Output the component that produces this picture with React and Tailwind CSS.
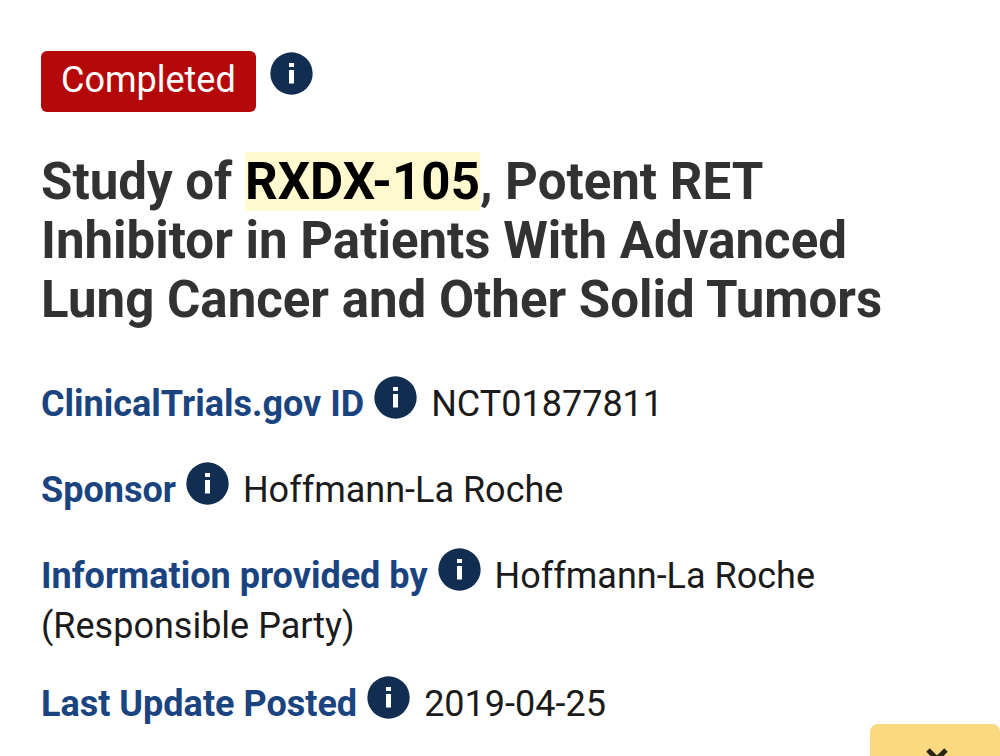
const FIELDS = [
  { label: 'ClinicalTrials.gov ID', value: 'NCT01877811', spacing: 'mb-9' },
  { label: 'Sponsor', value: 'Hoffmann-La Roche', spacing: 'mb-9' },
  { label: 'Information provided by', value: 'Hoffmann-La Roche (Responsible Party)', spacing: 'mb-7' },
  { label: 'Last Update Posted', value: '2019-04-25', spacing: 'mb-0' },
];

function InfoButton({ label }) {
  return (
    <button
      type="button"
      aria-label={`More about ${label}`}
      className="-my-2 inline-block size-[43px] align-[-3px]"
    >
      <svg viewBox="0 0 43 43" className="block size-full" aria-hidden="true">
        <circle cx="21.5" cy="21.5" r="21.2" fill="#112e51" />
        <path d="M19 11h5v4h-5zM19 18h5v13.5h-5z" fill="#fff" />
      </svg>
    </button>
  );
}

function Field({ label, value, spacing }) {
  return (
    <div className={spacing}>
      <dt className="mr-2.5 inline font-bold text-[#1a4480]">{label}</dt>
      <dd className="inline">
        <InfoButton label={label} />
        <span className="ml-3.5">{value}</span>
      </dd>
    </div>
  );
}

export default function App() {
  return (
    <div className="min-h-screen overflow-hidden bg-white font-[Roboto,sans-serif] text-[#1b1b1b]">
      <main className="px-[41px] pt-[51px]">
        <div className="flex items-start gap-3.5">
          <span className="rounded-md bg-[#b50909] px-5 pt-[3px] pb-[5px] text-[36px] leading-[53px] text-white">
            Completed
          </span>
          <div className="pt-[9px]">
            <InfoButton label="recruitment status" />
          </div>
        </div>

        <h1 className="mt-10 text-[51px] leading-[59px] font-bold text-[#323232]">
          Study of <mark className="bg-[#fff9cf] text-black">RXDX-105</mark>, Potent RET Inhibitor in
          Patients With Advanced Lung Cancer and Other Solid Tumors
        </h1>

        <dl className="mt-[50px] text-[36px] leading-[50px]">
          {FIELDS.map((field) => (
            <Field key={field.label} {...field} />
          ))}
        </dl>
      </main>

      <button
        type="button"
        aria-label="Scroll to bottom"
        className="fixed right-0 bottom-0 flex h-8 w-[130px] justify-center overflow-hidden rounded-t-lg bg-[#fad980] pt-6 pl-1"
      >
        <svg viewBox="0 0 24 24" className="size-6 shrink-0" fill="none" stroke="#2b2718" strokeWidth="5" aria-hidden="true">
          <path d="M3 2l9 9 9-9M3 12l9 9 9-9" />
        </svg>
      </button>
    </div>
  );
}
